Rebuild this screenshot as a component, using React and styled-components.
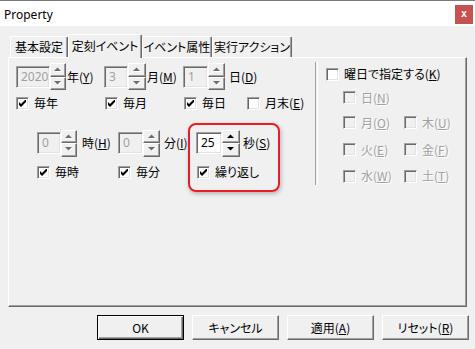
import React from "react";
import styled, { createGlobalStyle } from "styled-components";

const GlobalStyle = createGlobalStyle`
  html, body {
    margin: 0;
    padding: 0;
    background: #f0f0f0;
  }
  body {
    font-family: "Noto Sans CJK JP", "Noto Sans", sans-serif;
    font-feature-settings: "palt";
    font-size: 12px;
    color: #000;
  }
`;

const Window = styled.div`
  width: 475px;
  height: 349px;
  display: flex;
  flex-direction: column;
  background: #f0f0f0;
  overflow: hidden;
`;

const TitleBar = styled.div`
  height: 25px;
  border-top: 1px solid #7a7a7a;
  background: #fff;
  display: flex;
  align-items: center;
  justify-content: space-between;
  padding-left: 4px;
  padding-right: 2px;
`;

const Title = styled.span`
  font-family: "Noto Sans", "Liberation Sans", sans-serif;
  font-size: 12px;
  margin-top: 1px;
`;

const CloseButton = styled.div`
  width: 18px;
  height: 19px;
  margin-top: 1px;
  background: #c75050;
  color: #fff;
  display: flex;
  align-items: center;
  justify-content: center;
  font-family: "Liberation Sans", sans-serif;
  font-weight: bold;
  font-size: 10px;
  line-height: 1;
`;

const Body = styled.div`
  padding: 8px 0 0 8px;
  display: flex;
  flex-direction: column;
`;

const TabRow = styled.div`
  height: 23px;
  display: flex;
  align-items: flex-start;
  padding-left: 2px;
  position: relative;
  z-index: 2;
`;

const Tab = styled.div`
  box-sizing: border-box;
  width: ${(p) => p.width}px;
  height: ${(p) => (p.active ? 24 : 21)}px;
  margin-top: ${(p) => (p.active ? 0 : 2)}px;
  background: #f0f0f0;
  border-top: 1px solid #fff;
  border-left: 1px solid #fff;
  border-right: 1px solid #696969;
  box-shadow: inset -1px 0 0 #a0a0a0;
  border-radius: 2px 2px 0 0;
  display: flex;
  align-items: center;
  justify-content: center;
  line-height: 1;
  padding-bottom: ${(p) => (p.active ? 2 : 0)}px;
`;

const Panel = styled.div`
  position: relative;
  box-sizing: border-box;
  width: 459px;
  height: 250px;
  border-top: 1px solid #fff;
  border-left: 1px solid #fff;
  border-right: 1px solid #696969;
  border-bottom: 1px solid #696969;
  box-shadow: inset -1px -1px 0 #a0a0a0;
  display: flex;
`;

const LeftArea = styled.div`
  width: 306px;
  padding: 4px 0 0 7px;
  box-sizing: border-box;
  display: flex;
  flex-direction: column;
`;

const Row = styled.div`
  display: flex;
  align-items: center;
  height: ${(p) => p.h}px;
  margin-top: ${(p) => p.mt || 0}px;
  padding-left: ${(p) => p.pl || 0}px;
`;

const Cell = styled.div`
  display: flex;
  align-items: center;
  width: ${(p) => (p.w ? `${p.w}px` : "auto")};
  flex-shrink: 0;
`;

const Field = styled.div`
  box-sizing: border-box;
  width: ${(p) => p.w}px;
  height: 22px;
  background: ${(p) => (p.disabled ? "#f0f0f0" : "#fff")};
  color: ${(p) => (p.disabled ? "#a0a0a0" : "#000")};
  border-top: 1px solid #a0a0a0;
  border-left: 1px solid #a0a0a0;
  border-right: 1px solid #fff;
  border-bottom: 1px solid #fff;
  box-shadow: inset 1px 1px 0 #696969, inset -1px -1px 0 #e3e3e3;
  display: flex;
  align-items: center;
  padding-left: 4px;
  font-family: "Noto Sans", sans-serif;
  font-size: 12px;
  line-height: 1;
`;

const Spinner = styled.div`
  width: ${(p) => p.w}px;
  height: 27px;
  display: flex;
  flex-direction: column;
  flex-shrink: 0;
`;

const SpinHalf = styled.div`
  flex: 1;
  box-sizing: border-box;
  background: #f0f0f0;
  border-top: 1px solid #fff;
  border-left: 1px solid #fff;
  border-right: 1px solid #696969;
  border-bottom: 1px solid #696969;
  box-shadow: inset -1px -1px 0 #a0a0a0;
  display: flex;
  align-items: center;
  justify-content: center;
`;

const Label = styled.span`
  margin-left: ${(p) => p.ml ?? 3}px;
  white-space: nowrap;
  line-height: 1;
  color: ${(p) => (p.disabled ? "#a0a0a0" : "#000")};
  text-shadow: ${(p) => (p.disabled ? "1px 1px 0 #fff" : "none")};
  u {
    text-decoration-thickness: 1px;
    text-underline-offset: 1px;
  }
`;

const Box = styled.span`
  box-sizing: border-box;
  width: 13px;
  height: 13px;
  flex-shrink: 0;
  background: ${(p) => (p.disabled ? "#f0f0f0" : "#fff")};
  border-top: 1px solid #a0a0a0;
  border-left: 1px solid #a0a0a0;
  border-right: 1px solid #fff;
  border-bottom: 1px solid #fff;
  box-shadow: inset 1px 1px 0 #696969, inset -1px -1px 0 #e3e3e3;
  display: flex;
  align-items: center;
  justify-content: center;
`;

const CheckRow = styled.label`
  display: flex;
  align-items: center;
  white-space: nowrap;
`;

const Separator = styled.div`
  width: 1px;
  height: 123px;
  margin-top: 4px;
  border-left: 1px solid #a0a0a0;
  border-right: 1px solid #fff;
  flex-shrink: 0;
`;

const RightArea = styled.div`
  padding: 4px 0 0 8px;
  display: flex;
  flex-direction: column;
`;

const DayGrid = styled.div`
  display: grid;
  grid-template-columns: 61px auto;
  grid-template-rows: 23px 27px 27px 26px;
  padding-left: 17px;
  align-items: center;
`;

const Highlight = styled.div`
  position: absolute;
  left: 179px;
  top: 65px;
  width: 92px;
  height: 69px;
  box-sizing: border-box;
  border: 2px solid #ec1c24;
  border-radius: 8px;
  box-shadow: 1px 2px 4px rgba(0, 0, 0, 0.25);
  pointer-events: none;
`;

const ButtonBar = styled.div`
  display: flex;
  justify-content: flex-end;
  gap: 8px;
  padding: 8px 6px 0 0;
`;

const Button = styled.div`
  box-sizing: border-box;
  width: 87px;
  height: 25px;
  background: #f0f0f0;
  border-top: 1px solid ${(p) => (p.primary ? "#000" : "#fff")};
  border-left: 1px solid ${(p) => (p.primary ? "#000" : "#fff")};
  border-right: 1px solid ${(p) => (p.primary ? "#000" : "#696969")};
  border-bottom: 1px solid ${(p) => (p.primary ? "#000" : "#696969")};
  box-shadow: ${(p) =>
    p.primary
      ? "inset 1px 1px 0 #fff, inset -1px -1px 0 #696969, inset -2px -2px 0 #a0a0a0"
      : "inset -1px -1px 0 #a0a0a0"};
  display: flex;
  align-items: center;
  justify-content: center;
  line-height: 1;
`;

const Arrow = ({ up, disabled }) => (
  <svg width="8" height="5" viewBox="0 0 8 5">
    {disabled && (
      <polygon
        points={up ? "1,5 8,5 4.5,1.5" : "1,1 8,1 4.5,4.5"}
        fill="#fff"
      />
    )}
    <polygon
      points={up ? "0,4 7,4 3.5,0.5" : "0,0 7,0 3.5,3.5"}
      fill={disabled ? "#6d6d6d" : "#000"}
    />
  </svg>
);

const Spin = ({ value, fieldW, spinW = 16, disabled, children, ml }) => (
  <>
    <Field w={fieldW} disabled={disabled}>
      {value}
    </Field>
    <Spinner w={spinW}>
      <SpinHalf>
        <Arrow up disabled={disabled} />
      </SpinHalf>
      <SpinHalf>
        <Arrow disabled={disabled} />
      </SpinHalf>
    </Spinner>
    <Label ml={ml}>{children}</Label>
  </>
);

const Check = ({ checked, disabled, children }) => (
  <CheckRow>
    <Box disabled={disabled}>
      {checked && (
        <svg width="7" height="7" viewBox="0 0 7 7">
          <path d="M0 2 L2 4 L7 -1 L7 2 L2 7 L0 5 Z" fill="#000" />
        </svg>
      )}
    </Box>
    <Label ml={5} disabled={disabled}>
      {children}
    </Label>
  </CheckRow>
);

const days = [
  ["日", "N"],
  [null, null],
  ["月", "O"],
  ["木", "U"],
  ["火", "E"],
  ["金", "F"],
  ["水", "W"],
  ["土", "T"],
];

export default function App() {
  return (
    <Window>
      <GlobalStyle />
      <TitleBar>
        <Title>Property</Title>
        <CloseButton>x</CloseButton>
      </TitleBar>
      <Body>
        <TabRow>
          <Tab width={58}>基本設定</Tab>
          <Tab width={74} active>
            定刻イベント
          </Tab>
          <Tab width={70}>イベント属性</Tab>
          <Tab width={80}>実行アクション</Tab>
        </TabRow>
        <Panel>
          <LeftArea>
            <Row h={29}>
              <Cell w={88}>
                <Spin value="2020" fieldW={34} disabled ml={1}>
                  年(<u>Y</u>)
                </Spin>
              </Cell>
              <Cell w={79}>
                <Spin value="3" fieldW={24} spinW={18} disabled ml={1}>
                  月(<u>M</u>)
                </Spin>
              </Cell>
              <Cell>
                <Spin value="1" fieldW={25} spinW={17} disabled ml={4}>
                  日(<u>D</u>)
                </Spin>
              </Cell>
            </Row>
            <Row h={24}>
              <Cell w={89}>
                <Check checked>毎年</Check>
              </Cell>
              <Cell w={79}>
                <Check checked>毎月</Check>
              </Cell>
              <Cell w={63}>
                <Check checked>毎日</Check>
              </Cell>
              <Cell>
                <Check>
                  月末(<u>E</u>)
                </Check>
              </Cell>
            </Row>
            <Row h={28} mt={14} pl={21}>
              <Cell w={81}>
                <Spin value="0" fieldW={24} disabled ml={5}>
                  時(<u>H</u>)
                </Spin>
              </Cell>
              <Cell w={78}>
                <Spin value="0" fieldW={25} spinW={17} disabled ml={4}>
                  分(<u>I</u>)
                </Spin>
              </Cell>
              <Cell>
                <Spin value="25" fieldW={26} spinW={18}>
                  秒(<u>S</u>)
                </Spin>
              </Cell>
            </Row>
            <Row h={30} pl={21}>
              <Cell w={81}>
                <Check checked>毎時</Check>
              </Cell>
              <Cell w={79}>
                <Check checked>毎分</Check>
              </Cell>
              <Cell>
                <Check checked>繰り返し</Check>
              </Cell>
            </Row>
          </LeftArea>
          <Separator />
          <RightArea>
            <Row h={24}>
              <Check>
                曜日で指定する(<u>K</u>)
              </Check>
            </Row>
            <DayGrid>
              {days.map(([d, k], i) =>
                d ? (
                  <Check key={i} disabled>
                    {d}(<u>{k}</u>)
                  </Check>
                ) : (
                  <span key={i} />
                )
              )}
            </DayGrid>
          </RightArea>
          <Highlight />
        </Panel>
        <ButtonBar>
          <Button primary>OK</Button>
          <Button>キャンセル</Button>
          <Button>
            適用(<u>A</u>)
          </Button>
          <Button>
            リセット(<u>R</u>)
          </Button>
        </ButtonBar>
      </Body>
    </Window>
  );
}
